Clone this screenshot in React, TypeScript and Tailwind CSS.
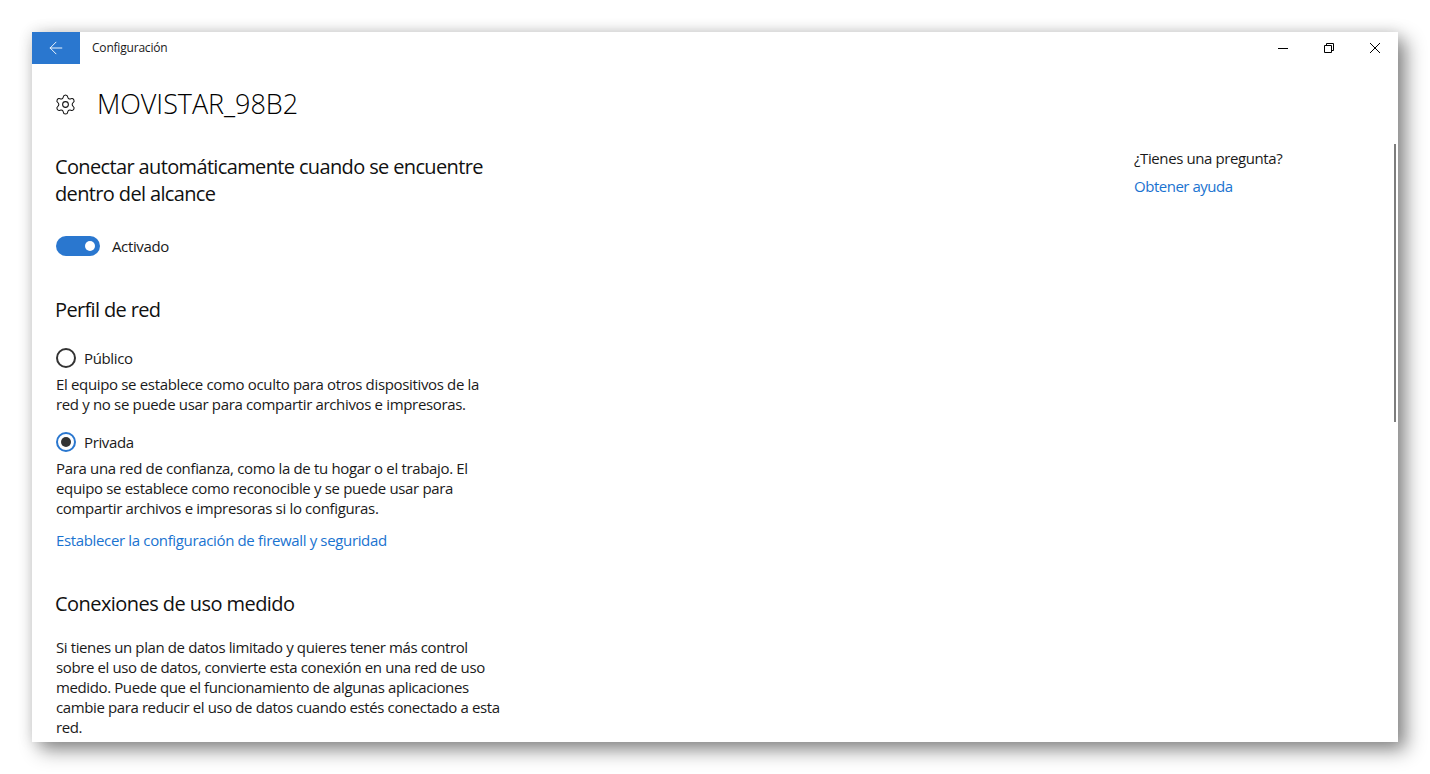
import { ArrowLeft, Settings } from "lucide-react";

const FONT = "font-['Open_Sans','Noto_Sans',sans-serif]";

function WindowButtons() {
  return (
    <div className="flex items-center text-black">
      <button className="w-[46px] h-8 flex items-center justify-center">
        <svg width="10" height="10" viewBox="0 0 10 10"><path d="M0 5.5h10" stroke="currentColor" fill="none" /></svg>
      </button>
      <button className="w-[46px] h-8 flex items-center justify-center">
        <svg width="10" height="10" viewBox="0 0 10 10"><path d="M.5 2.5h7v7h-7zM2.5 2.5v-2h7v7h-2" stroke="currentColor" fill="none" /></svg>
      </button>
      <button className="w-[46px] h-8 flex items-center justify-center">
        <svg width="10" height="10" viewBox="0 0 10 10"><path d="M0 0l10 10M10 0L0 10" stroke="currentColor" fill="none" /></svg>
      </button>
    </div>
  );
}

function Radio({ label, checked }: { label: string; checked?: boolean }) {
  return (
    <div className="flex items-center h-5 gap-2">
      <span
        className={
          checked
            ? "w-5 h-5 rounded-full border-2 border-[#2a77cf] flex items-center justify-center"
            : "w-5 h-5 rounded-full border-2 border-[#333333]"
        }
      >
        {checked && <span className="w-2.5 h-2.5 rounded-full bg-[#333333]" />}
      </span>
      <span className="tracking-[-0.36px]">{label}</span>
    </div>
  );
}

export default function App() {
  return (
    <div className={`w-[1430px] h-[774px] bg-white pl-8 pt-8 overflow-hidden ${FONT}`}>
      <div className="relative w-[1366px] h-[710px] bg-white flex flex-col text-[15px] leading-5 text-[#1a1a1a] shadow-[8px_8px_18px_rgba(0,0,0,0.45),0_0_14px_rgba(0,0,0,0.12)]">
        {/* title bar */}
        <div className="h-8 flex items-center shrink-0">
          <div className="w-12 h-8 bg-[#2a77cf] flex items-center justify-center text-white">
            <ArrowLeft size={20} strokeWidth={1.1} />
          </div>
          <div className="ml-3 flex-1 text-xs tracking-[-0.2px]">Configuración</div>
          <WindowButtons />
        </div>

        <div className="flex flex-1 min-h-0 overflow-hidden">
          <div className="w-[1102px] pl-6 shrink-0">
            <div className="flex items-center h-10 mt-5">
              <Settings size={23} strokeWidth={1.1} className="-ml-[2px] text-[#111111]" />
              <h1 className="ml-[20px] text-[27px] leading-10 font-light tracking-[-0.05px] text-black">MOVISTAR_98B2</h1>
            </div>

            <div className="mt-[29px] -ml-px text-[20px] leading-[27px] tracking-[-0.64px] text-[#111111]">
              Conectar automáticamente cuando se encuentre<br />dentro del alcance
            </div>

            <div className="flex items-center h-5 mt-[29px] gap-3">
              <span className="w-11 h-5 rounded-full bg-[#2a77cf] flex items-center justify-end pr-[5px]">
                <span className="w-2.5 h-2.5 rounded-full bg-white" />
              </span>
              <span className="tracking-[-0.36px]">Activado</span>
            </div>

            <div className="mt-[40px] -ml-px text-[20px] leading-[27px] tracking-[-0.64px] text-[#111111]">Perfil de red</div>

            <div className="mt-[25px]">
              <Radio label="Público" />
              <p className="mt-[6px] tracking-[-0.34px]">
                El equipo se establece como oculto para otros dispositivos de la<br />
                red y no se puede usar para compartir archivos e impresoras.
              </p>
            </div>

            <div className="mt-[18px]">
              <Radio label="Privada" checked />
              <p className="mt-[6px] tracking-[-0.34px]">
                Para una red de confianza, como la de tu hogar o el trabajo. El<br />
                equipo se establece como reconocible y se puede usar para<br />
                compartir archivos e impresoras si lo configuras.
              </p>
            </div>

            <div className="mt-3 text-[#1a73d0] tracking-[-0.35px]">Establecer la configuración de firewall y seguridad</div>

            <div className="mt-[40px] -ml-px text-[20px] leading-[27px] tracking-[-0.56px] text-[#111111]">Conexiones de uso medido</div>

            <p className="mt-[20px] tracking-[-0.39px]">
              Si tienes un plan de datos limitado y quieres tener más control<br />
              sobre el uso de datos, convierte esta conexión en una red de uso<br />
              medido. Puede que el funcionamiento de algunas aplicaciones<br />
              cambie para reducir el uso de datos cuando estés conectado a esta<br />
              red.
            </p>
          </div>

          <div className="flex-1 pt-[84px]">
            <div className="tracking-[-0.4px]">¿Tienes una pregunta?</div>
            <div className="mt-2 text-[#1a73d0] tracking-[-0.48px]">Obtener ayuda</div>
          </div>
        </div>

        {/* overlay scrollbar */}
        <div className="absolute right-[2px] top-[112px] w-[2px] h-[278px] bg-[#7d7d7d]" />
      </div>
    </div>
  );
}
